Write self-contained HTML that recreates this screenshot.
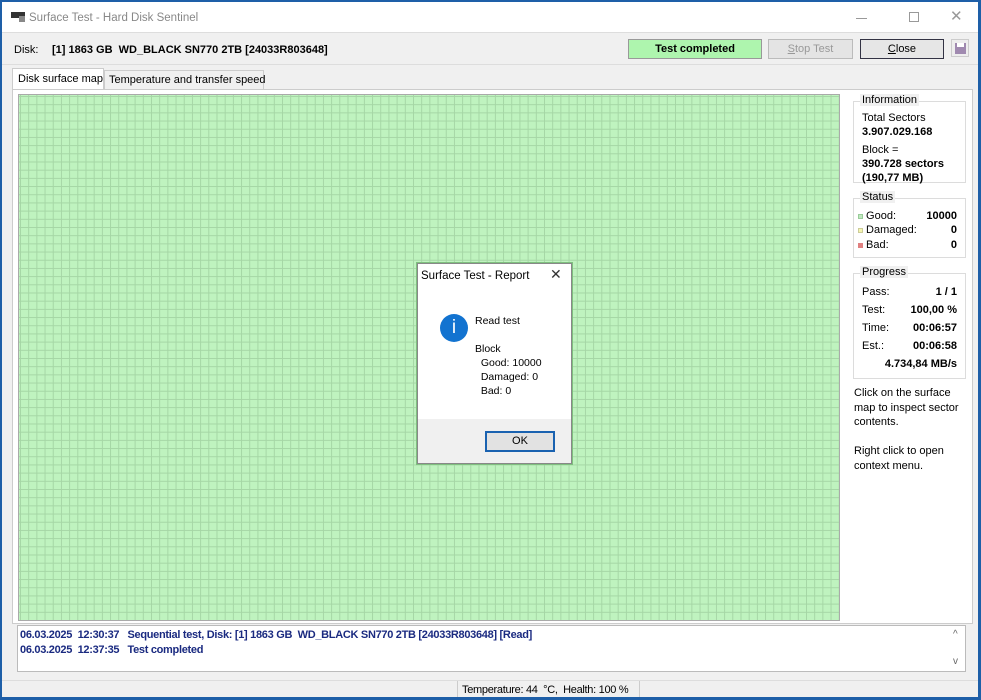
<!DOCTYPE html>
<html><head><meta charset="utf-8"><style>
*{margin:0;padding:0;box-sizing:border-box}
body{width:981px;height:700px;overflow:hidden;background:#1e5fa8;font-family:"Liberation Sans",sans-serif;font-size:11px;color:#000;position:relative}
.win{position:absolute;left:2px;top:2px;width:976px;height:695px;background:#f0f0f0}
.title{position:absolute;left:0;top:0;width:976px;height:31px;background:#fff;border-bottom:1px solid #ddd}
.abs{position:absolute;white-space:nowrap}
.b{font-weight:bold}
.grid{position:absolute;left:16px;top:92px;width:822px;height:527px;border:1px solid #aaa;
background-color:#bff3bf;
background-image:linear-gradient(to right,#a5d6a5 1px,transparent 1px),linear-gradient(to bottom,#a5d6a5 1px,transparent 1px);
background-size:8.2px 8.2px;background-position:1px 1px}
.grp{position:absolute;border:1px solid #dcdcdc;background:#fff}
.grp .lg{position:absolute;left:6px;top:-8px;background:#f0f0f0;padding:0 2px;font-size:11px}
.row{position:absolute;left:8px;right:8px;font-size:11px}
.row span{float:right;font-weight:bold}
</style></head><body>
<div class="win">
<div class="title">
 <div class="abs" style="left:9px;top:10px;width:14px;height:6px;background:#333"></div>
 <div class="abs" style="left:17px;top:14px;width:6px;height:6px;background:#888"></div>
 <div class="abs" style="left:27px;top:10px;font-size:11.5px;color:#888">Surface Test - Hard Disk Sentinel</div>
 <div class="abs" style="left:854px;top:16px;width:11px;height:1px;background:#999"></div>
 <div class="abs" style="left:907px;top:10px;width:10px;height:10px;border:1px solid #999"></div>
 <div class="abs" style="left:948px;top:5px;font-size:15px;color:#999">✕</div>
</div>
<div class="abs" style="left:12px;top:42px">Disk:</div>
<div class="abs b" style="left:50px;top:42px;font-size:11px">[1] 1863 GB &nbsp;WD_BLACK SN770 2TB [24033R803648]</div>
<div class="abs b" style="left:626px;top:37px;width:134px;height:20px;background:#aef5ae;border:1px solid #999;text-align:center;line-height:18px">Test completed</div>
<div class="abs" style="left:766px;top:37px;width:85px;height:20px;background:#e4e4e4;border:1px solid #bbb;text-align:center;line-height:18px;color:#999"><u>S</u>top Test</div>
<div class="abs" style="left:858px;top:37px;width:84px;height:20px;background:#e6e6e6;border:1px solid #334;text-align:center;line-height:18px"><u>C</u>lose</div>
<div class="abs" style="left:949px;top:37px;width:18px;height:18px;border:1px solid #ccc;background:#eee"><div class="abs" style="left:3px;top:3px;width:11px;height:11px;background:#a08ab0"></div><div class="abs" style="left:5px;top:3px;width:7px;height:4px;background:#fff"></div></div>
<div class="abs" style="left:0;top:62px;width:976px;height:1px;background:#ddd"></div>
<div class="abs" style="left:10px;top:66px;width:92px;height:22px;background:#fff;border:1px solid #ccc;border-bottom:none;padding:4px 0 0 5px">Disk surface map</div>
<div class="abs" style="left:102px;top:68px;width:160px;height:20px;background:#f0f0f0;border:1px solid #ccc;border-bottom:none;padding:3px 0 0 4px">Temperature and transfer speed</div>
<div class="abs" style="left:10px;top:87px;width:961px;height:535px;background:#fff;border:1px solid #ccc"></div>
<div class="grid"></div>

<div class="grp" style="left:851px;top:99px;width:113px;height:82px"><div class="lg">Information</div>
 <div class="abs" style="left:8px;top:9px;line-height:14px">Total Sectors<br><b>3.907.029.168</b></div>
 <div class="abs" style="left:8px;top:41px;line-height:14px">Block =<br><b>390.728 sectors<br>(190,77 MB)</b></div>
</div>
<div class="grp" style="left:851px;top:196px;width:113px;height:60px"><div class="lg">Status</div>
 <div class="row" style="top:11px;left:4px"><i style="display:inline-block;width:5px;height:5px;background:#bfe8bf;border:1px solid #9c9"></i> Good:<span>10000</span></div>
 <div class="row" style="top:25px;left:4px"><i style="display:inline-block;width:5px;height:5px;background:#f5f5b0;border:1px solid #cc9"></i> Damaged:<span>0</span></div>
 <div class="row" style="top:40px;left:4px"><i style="display:inline-block;width:5px;height:5px;background:#e08080"></i> Bad:<span>0</span></div>
</div>
<div class="grp" style="left:851px;top:271px;width:113px;height:106px"><div class="lg">Progress</div>
 <div class="row" style="top:12px">Pass:<span>1 / 1</span></div>
 <div class="row" style="top:30px">Test:<span>100,00 %</span></div>
 <div class="row" style="top:48px">Time:<span>00:06:57</span></div>
 <div class="row" style="top:66px">Est.:<span>00:06:58</span></div>
 <div class="row" style="top:84px"><span>4.734,84 MB/s</span></div>
</div>
<div class="abs" style="left:852px;top:384px;line-height:14.5px">Click on the surface<br>map to inspect sector<br>contents.<br><br>Right click to open<br>context menu.</div>

<div class="abs" style="left:15px;top:623px;width:949px;height:47px;background:#fff;border:1px solid #bbb">
 <div class="abs b" style="left:2px;top:3px;color:#1a2a80;font-size:11px;letter-spacing:-0.3px;white-space:pre">06.03.2025  12:30:37   Sequential test, Disk: [1] 1863 GB  WD_BLACK SN770 2TB [24033R803648] [Read]</div>
 <div class="abs b" style="left:2px;top:18px;color:#1a2a80;font-size:11px;letter-spacing:-0.3px;white-space:pre">06.03.2025  12:37:35   Test completed</div>
 <div class="abs" style="left:935px;top:3px;color:#666;font-size:10px">^</div>
 <div class="abs" style="left:935px;top:30px;color:#666;font-size:10px">v</div>
</div>
<div class="abs" style="left:0;top:678px;width:976px;height:1px;background:#ddd"></div>
<div class="abs" style="left:455px;top:679px;width:1px;height:16px;background:#ccc"></div>
<div class="abs" style="left:460px;top:682px;font-size:11px;letter-spacing:-0.3px">Temperature: 44 &nbsp;°C, &nbsp;Health: 100 %</div>
<div class="abs" style="left:637px;top:679px;width:1px;height:16px;background:#ccc"></div>

<div class="abs" style="left:415px;top:261px;width:155px;height:201px;border:1px solid #888;background:#fff;box-shadow:0 0 0 1px #7fbf7f">
 <div class="abs" style="left:3px;top:6px;font-size:11.5px">Surface Test - Report</div>
 <div class="abs" style="left:132px;top:2px;font-size:14px;color:#333">✕</div>
 <div class="abs" style="left:22px;top:50px;width:28px;height:28px;border-radius:50%;background:#1273d0;color:#fff;text-align:center;font-size:19px;line-height:28px">i</div>
 <div class="abs" style="left:57px;top:50px;font-size:10.5px;line-height:14px">Read test<br><br>Block<br>&nbsp;&nbsp;Good: 10000<br>&nbsp;&nbsp;Damaged: 0<br>&nbsp;&nbsp;Bad: 0</div>
 <div class="abs" style="left:0;top:155px;width:153px;height:44px;background:#f0f0f0"></div>
 <div class="abs" style="left:67px;top:167px;width:70px;height:21px;border:2px solid #1a62b0;background:#e2e2e2;text-align:center;line-height:17px;font-size:11px">OK</div>
</div>
</div>
</body></html>
